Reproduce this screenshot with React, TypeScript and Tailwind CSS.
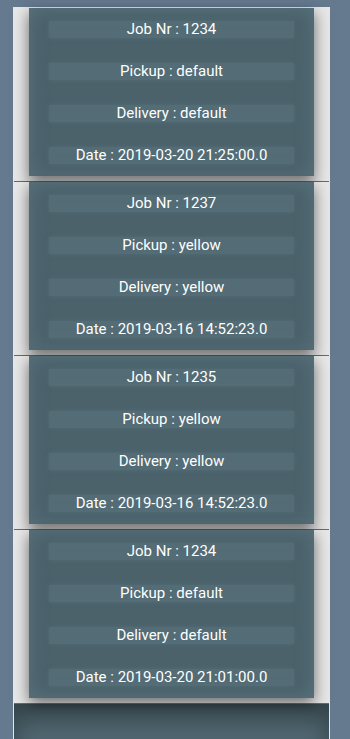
const jobs = [
  { nr: '1234', pickup: 'default', delivery: 'default', date: '2019-03-20 21:25:00.0' },
  { nr: '1237', pickup: 'yellow', delivery: 'yellow', date: '2019-03-16 14:52:23.0' },
  { nr: '1235', pickup: 'yellow', delivery: 'yellow', date: '2019-03-16 14:52:23.0' },
  { nr: '1234', pickup: 'default', delivery: 'default', date: '2019-03-20 21:01:00.0' },
];

const Row = ({ children }: { children: React.ReactNode }) => (
  <div className="mx-[20px] h-[17px] bg-[#577179]/70 text-center text-[15px] leading-[17px] text-white shadow-[0_0_4px_rgba(90,115,125,0.6)]">
    {children}
  </div>
);

const JobCard = ({ job }: { job: (typeof jobs)[number] }) => (
  <div className="bg-[#e7e7e7] border-b border-[#d2403a]">
    <div className="ml-[15px] flex h-[168px] w-[285px] flex-col gap-[25px] bg-[#4b626b] pt-[13px] shadow-[0_5px_14px_rgba(0,0,0,0.55),inset_0_0_18px_#59737d]">
      <Row>Job Nr : {job.nr}</Row>
      <Row>Pickup : {job.pickup}</Row>
      <Row>Delivery : {job.delivery}</Row>
      <Row>Date : {job.date}</Row>
    </div>
    <div className="h-[5px]" />
  </div>
);

export default function App() {
  return (
    <div
      className="h-[739px] overflow-hidden bg-[#65798f] pl-[13px] pt-[7px]"
      style={{ fontFamily: 'Roboto, "Noto Sans", sans-serif' }}
    >
      <div className="w-[317px] h-[800px] border-x border-t border-[#e3e8ed] bg-[#506771]">
        {jobs.map((job, i) => (
          <JobCard key={i} job={job} />
        ))}
        <div className="h-[60px] shadow-[inset_0_14px_26px_rgba(0,0,0,0.35)]" />
      </div>
    </div>
  );
}
